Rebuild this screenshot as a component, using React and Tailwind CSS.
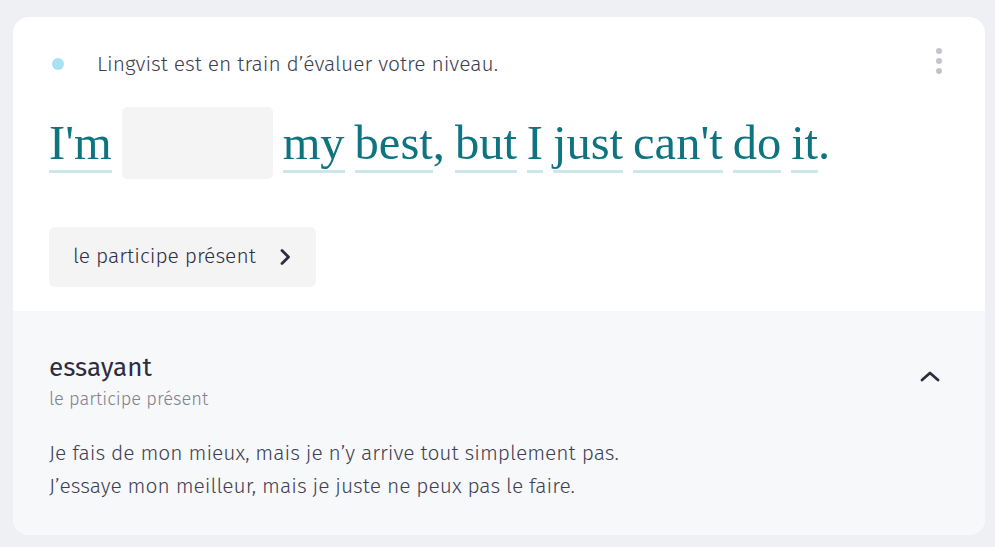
const words = ["I'm", null, 'my', 'best,', 'but', 'I', 'just', "can't", 'do', 'it.']

function Word({ text }) {
  const punct = /[.,]$/.test(text)
  const core = punct ? text.slice(0, -1) : text
  return (
    <span className="inline-block">
      <span className="border-b-[3px] border-[#cde6ea] pb-[1px]">{core}</span>
      {punct && <span>{text.slice(-1)}</span>}
    </span>
  )
}

function Kebab() {
  return (
    <div className="flex flex-col gap-[4px]">
      <span className="block w-[6px] h-[6px] rounded-full bg-[#c3c3cb]" />
      <span className="block w-[6px] h-[6px] rounded-full bg-[#c3c3cb]" />
      <span className="block w-[6px] h-[6px] rounded-full bg-[#c3c3cb]" />
    </div>
  )
}

export default function App() {
  const sans = { fontFamily: '"Fira Sans", "Open Sans", "Noto Sans", sans-serif' }
  return (
    <div className="min-h-screen bg-[#eff0f4] pt-[17px] pl-[13px] pr-[10px] pb-[12px]" style={sans}>
      <div className="w-[972px] rounded-[16px] overflow-hidden bg-white">
        <div className="px-[36px] pt-[30px] pb-[24px]">
          <div className="flex items-start justify-between h-[32px]">
            <div className="flex items-center gap-[33px] pt-[2px]">
              <span className="block w-[12px] h-[12px] rounded-full bg-[#a9e1f4] ml-[3px]" />
              <span className="text-[21px] leading-[30px] font-light text-[#3d3e52]">Lingvist est en train d’évaluer votre niveau.</span>
            </div>
            <div className="pr-[7px] pt-[1px]"><Kebab /></div>
          </div>

          <div className="flex items-center flex-wrap gap-x-[10px] mt-[28px] text-[48.5px] leading-[72px] text-[#0e7480]"
            style={{ fontFamily: '"Liberation Serif", "DejaVu Serif", serif' }}>
            {words.map((w, i) =>
              w === null ? (
                <span key={i} className="block w-[151px] h-[72px] rounded-[5px] bg-[#f4f4f4]" />
              ) : (
                <Word key={i} text={w} />
              )
            )}
          </div>

          <button className="mt-[48px] h-[60px] w-[267px] rounded-[6px] bg-[#f4f4f5] flex items-center pl-[24px] gap-[23px] text-[21px] font-light text-[#2f3043]">
            <span>le participe présent</span>
            <svg width="12" height="18" viewBox="0 0 12 18" fill="none">
              <path d="M3 2.5l6.5 6.5-6.5 6.5" stroke="#2c2d3f" strokeWidth="2.8" strokeLinecap="round" strokeLinejoin="round" />
            </svg>
          </button>
        </div>

        <div className="bg-[#f7f8fa] px-[36px] pt-[42px] pb-[32px]">
          <div className="flex justify-between items-start">
            <div>
              <div className="text-[26px] leading-[30px] text-[#2c2d3f]">essayant</div>
              <div className="text-[18.3px] leading-[24px] font-light text-[#80828f] mt-[4px]">le participe présent</div>
            </div>
            <svg className="mt-[16px] mr-[8px]" width="22" height="14" viewBox="0 0 22 14" fill="none">
              <path d="M3 11l8-7 8 7" stroke="#2c2d3f" strokeWidth="2.8" strokeLinecap="round" strokeLinejoin="round" />
            </svg>
          </div>
          <div className="mt-[26px] text-[21px] leading-[33px] font-light text-[#3f4055]">
            <div>Je fais de mon mieux, mais je n’y arrive tout simplement pas.</div>
            <div>J’essaye mon meilleur, mais je juste ne peux pas le faire.</div>
          </div>
        </div>
      </div>
    </div>
  )
}
